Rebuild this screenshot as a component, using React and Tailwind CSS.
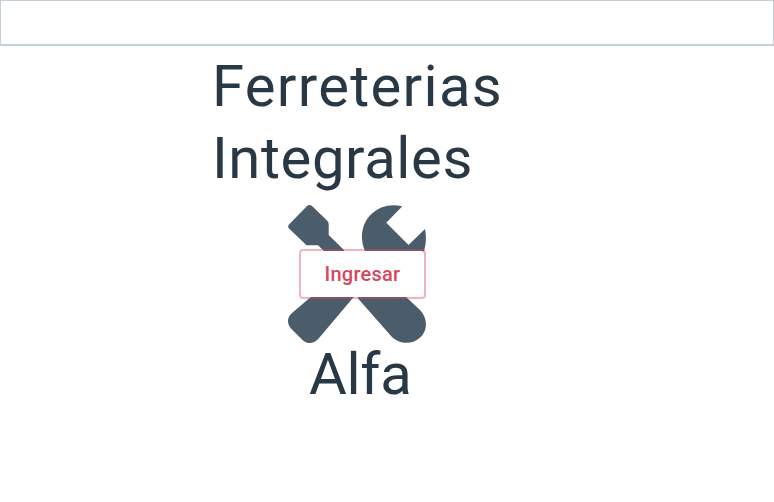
function ToolsIcon() {
  return (
    <svg className="block h-[138px] w-[138px]" viewBox="0 0 138 138" fill="#4b5c6b" aria-hidden="true">
      <path d="M19 1 Q21.500 -1 24 1 L39 15.500 Q40.700 17.200 40.700 19 V30 L56 45 L66.500 91 L31.500 132.500 C26 139.500 19 139.500 14 134.500 L3.500 124 C-1.500 118.500 -1 112.500 4 108 L24 91 L36 46 L30 40.300 H18.500 L1 23.500 Q-0.700 21.500 1 19.500 Z" />
      <path d="M114.300 1.200 L98.300 17.700 L120.500 40 L137 24 C138.500 31 138.200 39 136 46 L117 91 L132 105 C140 113 140 126 131.500 133 C124 140 111 139.300 103.500 131.500 L70 93.500 L77 46 C71 33 74 17 84 8.500 C92 1 103 -1.500 114.300 1.200 Z" />
    </svg>
  );
}

export default function App() {
  return (
    <div className="flex min-h-screen flex-col overflow-hidden bg-white font-['Roboto',sans-serif] text-[#293845]">
      <header className="h-[46px] w-full shrink-0 border border-b-2 border-[#c3cfd9]" />
      <main className="ml-[212px] mt-[4px] flex w-[290px] flex-col">
        <h1 className="whitespace-nowrap text-[58px] font-normal leading-[72px]">
          <span className="block tracking-[1.3px]">Ferreterias</span>
          <span className="block tracking-[0.6px]">Integrales</span>
        </h1>
        <div className="relative ml-[76px] mt-[11px] h-[138px] w-[138px]">
          <ToolsIcon />
          <button className="absolute left-[11px] top-[44px] flex h-[50px] w-[127px] items-center justify-center rounded-[4px] border-2 border-[#dc4760]/40 bg-white bg-clip-padding text-[20px] font-medium tracking-[0.25px] text-[#d6465f]">
            Ingresar
          </button>
        </div>
        <p className="ml-[97px] mt-[-5px] whitespace-nowrap text-[58px] leading-[72px] tracking-[-0.3px]">Alfa</p>
      </main>
    </div>
  );
}
